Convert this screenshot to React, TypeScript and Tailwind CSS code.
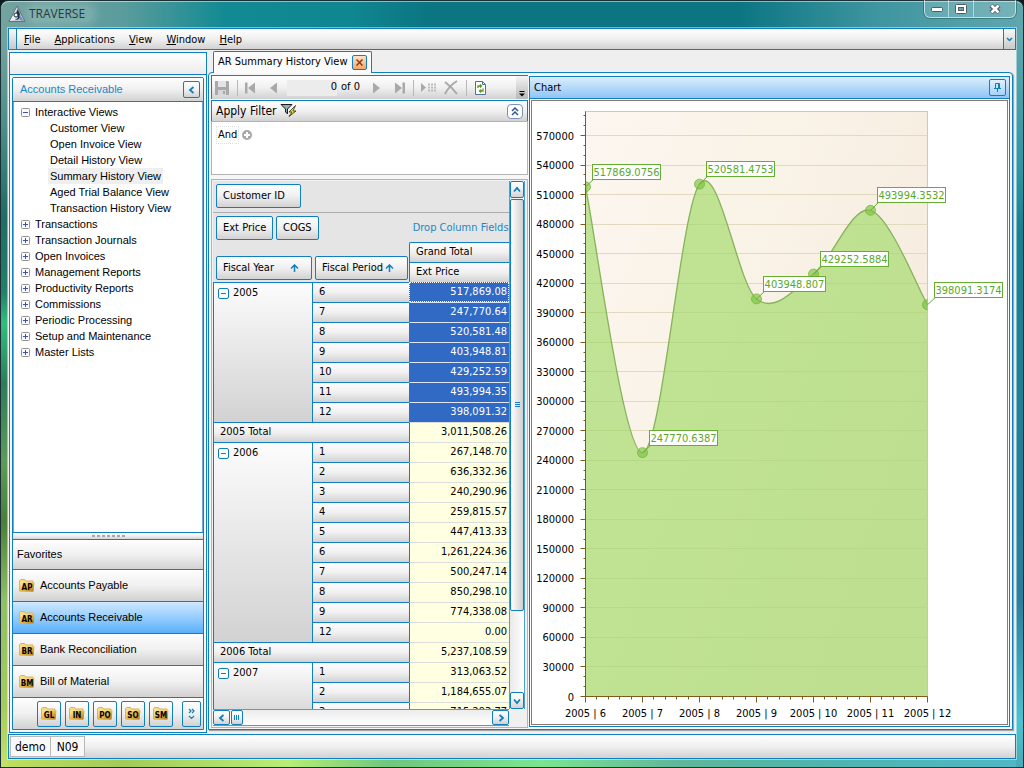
import type { ReactNode } from 'react'

const face = 'bg-linear-to-b from-[#fefefe] via-[#f0f0f0] to-[#d2d2d2]'
const edge = 'border-[#0e80bf]'
const field = `flex h-6 items-center rounded-xs border px-1.5 whitespace-nowrap ${face} ${edge}`

const menus = ['File', 'Applications', 'View', 'Window', 'Help']

const views = [
    'Customer View',
    'Open Invoice View',
    'Detail History View',
    'Summary History View',
    'Aged Trial Balance View',
    'Transaction History View',
]

const folders = [
    'Transactions',
    'Transaction Journals',
    'Open Invoices',
    'Management Reports',
    'Productivity Reports',
    'Commissions',
    'Periodic Processing',
    'Setup and Maintenance',
    'Master Lists',
]

const modules = [
    { code: 'AP', name: 'Accounts Payable' },
    { code: 'AR', name: 'Accounts Receivable' },
    { code: 'BR', name: 'Bank Reconciliation' },
    { code: 'BM', name: 'Bill of Material' },
]

const years = [
    {
        year: '2005',
        total: '3,011,508.26',
        selected: true,
        rows: [
            ['6', '517,869.08'],
            ['7', '247,770.64'],
            ['8', '520,581.48'],
            ['9', '403,948.81'],
            ['10', '429,252.59'],
            ['11', '493,994.35'],
            ['12', '398,091.32'],
        ],
    },
    {
        year: '2006',
        total: '5,237,108.59',
        selected: false,
        rows: [
            ['1', '267,148.70'],
            ['2', '636,332.36'],
            ['3', '240,290.96'],
            ['4', '259,815.57'],
            ['5', '447,413.33'],
            ['6', '1,261,224.36'],
            ['7', '500,247.14'],
            ['8', '850,298.10'],
            ['9', '774,338.08'],
            ['12', '0.00'],
        ],
    },
    {
        year: '2007',
        total: '',
        selected: false,
        rows: [
            ['1', '313,063.52'],
            ['2', '1,184,655.07'],
            ['3', '715,293.77'],
        ],
    },
]

const series = [
    { period: '6', value: 517869.0756 },
    { period: '7', value: 247770.6387 },
    { period: '8', value: 520581.4753 },
    { period: '9', value: 403948.807 },
    { period: '10', value: 429252.5884 },
    { period: '11', value: 493994.3532 },
    { period: '12', value: 398091.3174 },
]

function Folder({ code }: { code: string }) {
    return (
        <svg width="16" height="14" viewBox="0 0 16 14" aria-hidden="true" className="shrink-0">
            <defs>
                <linearGradient id="gold" x1="0" y1="0" x2="1" y2="1">
                    <stop offset="0" stopColor="#fdeb9c" />
                    <stop offset="0.55" stopColor="#e4b143" />
                    <stop offset="1" stopColor="#a8741c" />
                </linearGradient>
            </defs>
            <path d="M.5 12V1.500L1.500.5h4l1 1.500H14V12z" fill="#f8dc82" stroke="#d9b45c" />
            <path d="M1 3.500H15.500L14.500 12.500H1z" fill="url(#gold)" />
            <text x="8" y="10.500" textAnchor="middle" className="fill-black font-['DejaVu_Sans_Condensed'] text-[8px] font-bold">
                {code}
            </text>
        </svg>
    )
}

function Expander({ open }: { open: boolean }) {
    return (
        <svg width="9" height="9" viewBox="0 0 9 9" aria-hidden="true" className="shrink-0">
            <rect x="0.5" y="0.5" width="8" height="8" rx="1" fill="#fafafa" stroke="#919191" />
            <path d={open ? 'M2 4.5h5' : 'M2 4.5h5M4.5 2v5'} stroke="#3a56a8" />
        </svg>
    )
}

function Chevron({ d }: { d: string }) {
    return (
        <svg width="10" height="10" viewBox="0 0 10 10" fill="none" aria-hidden="true">
            <path d={d} stroke="#0e80bf" strokeWidth="1.8" />
        </svg>
    )
}

function SortArrow() {
    return (
        <svg width="9" height="8" viewBox="0 0 9 8" fill="none" aria-hidden="true">
            <path d="M4.5 8V1M1 4.5 4.5 1 8 4.5" stroke="#0e80bf" strokeWidth="1.5" />
        </svg>
    )
}

function ToolButton({ label, children }: { label: string; children: ReactNode }) {
    return (
        <button aria-label={label} className="flex size-5 shrink-0 items-center justify-center">
            <svg width="16" height="16" viewBox="0 0 16 16" aria-hidden="true">
                {children}
            </svg>
        </button>
    )
}

function TitleBar() {
    return (
        <header className="flex h-7 shrink-0 items-start justify-between">
            <div className="flex h-7 items-center gap-[3px]">
                <svg width="18" height="18" viewBox="0 0 18 18" aria-hidden="true">
                    <path d="M9 1 17 16.500H1z" fill="#b9c9d6" stroke="#5c7286" />
                    <path d="M9 2 6 9l-4 7 5-1z" fill="#e9eef3" />
                    <path d="M9 3c2 2-2 4 0 6s1 5-2 6c6 0 6-5 4-8-1-2-1-3-2-4z" fill="#1e2c3c" />
                    <circle cx="8" cy="10" r="2" fill="#fff" stroke="#1e2c3c" />
                    <path d="m11 9 5 7-4-1z" fill="#6f8cc0" />
                </svg>
                <h1 className="rounded-full bg-white/15 pr-2 font-['Open_Sans',sans-serif] text-xs text-[#263c40] shadow-[0_0_8px_4px_rgba(255,255,255,0.15)]">
                    TRAVERSE
                </h1>
            </div>
            <div className="flex h-[18px] rounded-b-md border border-t-0 border-white/60 bg-white/15 outline outline-[#24565e]/50">
                <button aria-label="Minimize" className="flex w-6 items-center justify-center border-r border-white/50">
                    <svg width="12" height="6" viewBox="0 0 12 6"><rect x="0.500" y="1.500" width="11" height="4" rx="1" fill="#fff" stroke="#555a66" /></svg>
                </button>
                <button aria-label="Maximize" className="flex w-[25px] items-center justify-center border-r border-white/50">
                    <svg width="12" height="10" viewBox="0 0 12 10">
                        <rect x="0.5" y="0.5" width="11" height="9" rx="1" fill="#fff" stroke="#555a66" />
                        <rect x="3.5" y="3.5" width="5" height="3" fill="#66a3ab" stroke="#555a66" />
                    </svg>
                </button>
                <button aria-label="Close" className="flex w-[41px] items-center justify-center">
                    <svg width="12" height="10" viewBox="0 0 12 10">
                        <path d="M2 1.500 10 8.500M10 1.500 2 8.500" stroke="#555a66" strokeWidth="4.500" />
                        <path d="M2.500 1.500 9.500 8.500M9.500 1.500 2.500 8.500" stroke="#fff" strokeWidth="2.500" />
                    </svg>
                </button>
            </div>
        </header>
    )
}

function MenuBar() {
    return (
        <nav className={`flex h-[22px] shrink-0 items-stretch border ${edge} ${face}`}>
            <span className={`w-2 border-r bg-linear-to-b from-[#fafafa] to-[#c8c8c8] ${edge}`} />
            <div className="flex flex-1 items-center gap-3.5 px-[7px]">
                {menus.map((m) => (
                    <button key={m} className="leading-none">
                        <span className="underline">{m[0]}</span>
                        {m.slice(1)}
                    </button>
                ))}
            </div>
            <button aria-label="More" className={`flex w-3 items-center justify-center border-l bg-linear-to-b from-[#fafafa] to-[#c8c8c8] ${edge}`}>
                <svg width="7" height="5" viewBox="0 0 7 5" fill="none"><path d="M1 1l2.500 2.500L6 1" stroke="#0e80bf" strokeWidth="1.500" /></svg>
            </button>
        </nav>
    )
}

function Sidebar() {
    return (
        <aside className={`ml-px mt-0.5 mb-px flex w-[198px] shrink-0 flex-col border bg-[#f6f6f6] font-['Liberation_Sans',sans-serif] ${edge}`}>
            <div className={`h-[22px] shrink-0 border-b bg-linear-to-b from-white to-[#ececec] ${edge}`} />
            <div className={`m-0.5 flex min-h-0 flex-1 flex-col rounded-t-xs border ${edge}`}>
                <div className={`flex h-6 shrink-0 items-center justify-between border-b pr-[3px] pl-[7px] text-[#1b87c6] ${face} ${edge}`}>
                    <h2>Accounts Receivable</h2>
                    <button aria-label="Collapse" className={`flex size-[17px] items-center justify-center rounded-xs border ${face} ${edge}`}>
                        <Chevron d="M6.5 2 3 5l3.500 3" />
                    </button>
                </div>
                <ul className="min-h-0 flex-1 overflow-hidden border-x border-[#6fa8d8] bg-white pt-0.5 pl-[7px]">
                    <li>
                        <button className="flex h-4 items-center gap-[5px]">
                            <Expander open={true} />
                            Interactive Views
                        </button>
                        <ul className="pl-[27px]">
                            {views.map((v) => (
                                <li key={v} className="flex h-4 items-center">
                                    <a href="#" className={v === 'Summary History View' ? 'bg-[#efefef] px-0.5 leading-4' : 'px-0.5 leading-4'}>
                                        {v}
                                    </a>
                                </li>
                            ))}
                        </ul>
                    </li>
                    {folders.map((f) => (
                        <li key={f}>
                            <button className="flex h-4 items-center gap-[5px]">
                                <Expander open={false} />
                                {f}
                            </button>
                        </li>
                    ))}
                </ul>
                <div className={`flex h-[7px] shrink-0 items-center justify-center gap-0.5 border-t ${face} ${edge}`}>
                    {[0, 1, 2, 3, 4, 5, 6].map((n) => (
                        <span key={n} className="h-0.5 w-[3px] bg-[#a8a8a8]" />
                    ))}
                </div>
                <button className={`flex h-[30px] shrink-0 items-center border-t px-1 ${face} ${edge}`}>Favorites</button>
                {modules.map((m) => (
                    <button
                        key={m.code}
                        className={`flex h-8 shrink-0 items-center gap-[5px] border-t px-1.5 ${edge} ${
                            m.code === 'AR' ? 'bg-linear-to-b from-[#cfe8ff] to-[#58b0fa]' : face
                        }`}
                    >
                        <Folder code={m.code} />
                        {m.name}
                    </button>
                ))}
                <div className={`flex h-8 shrink-0 items-center justify-end gap-1 border-t pr-0.5 ${face} ${edge}`}>
                    {['GL', 'IN', 'PO', 'SO', 'SM'].map((c) => (
                        <button key={c} aria-label={c} className={`flex h-[26px] w-6 items-center justify-center rounded-xs border ${face} ${edge}`}>
                            <Folder code={c} />
                        </button>
                    ))}
                    <button aria-label="Configure" className={`ml-[5px] flex h-[26px] w-[19px] items-center justify-center rounded-xs border ${face} ${edge}`}>
                        <svg width="8" height="12" viewBox="0 0 8 12" fill="none">
                            <path d="M1 1l2 2-2 2M4 1l2 2-2 2M1 8l2.500 2.500L6 8" stroke="#0e80bf" strokeWidth="1.200" />
                        </svg>
                    </button>
                </div>
            </div>
        </aside>
    )
}

function Toolbar() {
    const off = '#a9a9a9'
    return (
        <div className={`flex h-6 shrink-0 items-center border-t border-l ${face} ${edge}`}>
            <ToolButton label="Save">
                <path d="M1 1h13l1 1v13H1z" fill={off} />
                <path d="M4 1h8v6H4z" fill="#e4e4e4" />
                <path d="M4 10h8v5H4z" fill="#d8d8d8" />
                <path d="M9 11h2v3H9z" fill={off} />
            </ToolButton>
            <span className="mr-0.5 ml-[5px] h-4 w-px bg-[#b9b9b9]" />
            <ToolButton label="First">
                <path d="M3 2.500h2.500v11H3zM13 2.500v11L6 8z" fill={off} />
            </ToolButton>
            <span className="w-[3px]" />
            <ToolButton label="Previous">
                <path d="M12 2.500v11L5 8z" fill={off} />
            </ToolButton>
            <input aria-label="Position" defaultValue="0" className="ml-1 h-4 w-[50px] shrink-0 bg-[#ececec] text-right outline-none" />
            <span className="w-[29px] shrink-0 pl-1 whitespace-nowrap">of 0</span>
            <ToolButton label="Next">
                <path d="M5 2.500v11L12 8z" fill={off} />
            </ToolButton>
            <span className="w-1" />
            <ToolButton label="Last">
                <path d="M10.500 2.500H13v11h-2.500zM3 2.500v11L10 8z" fill={off} />
            </ToolButton>
            <span className="mr-1 ml-[3px] h-4 w-px bg-[#b9b9b9]" />
            <ToolButton label="Add">
                <path d="M1 3v9l5-4.500z" fill={off} />
                <path d="M8 4.500h8M8 7.500h8M8 10.500h8" stroke={off} strokeWidth="2" strokeDasharray="2 1" opacity="0.7" />
            </ToolButton>
            <span className="w-[3px]" />
            <ToolButton label="Delete">
                <path d="M2 2c4 3 8 7 12 12M14 1C9 4 5 8 2 14" fill="none" stroke={off} strokeWidth="2" />
            </ToolButton>
            <span className="mr-[3px] ml-[5px] h-4 w-px bg-[#b9b9b9]" />
            <ToolButton label="Refresh">
                <path d="M3.500 1.500h7l3 3v10h-10z" fill="#fff" stroke="#50709a" />
                <path d="M10.500 1.500v3h3" fill="none" stroke="#50709a" />
                <path d="M6 8V6h3.500M8 4.500 9.500 6 8 7.500M11 8.500v2.500H7.500M9 9.500 7.500 11 9 12.500" fill="none" stroke="#5b9b1b" strokeWidth="1.300" />
            </ToolButton>
            <button aria-label="Toolbar options" className="ml-auto flex h-full w-3 items-end justify-center bg-linear-to-b from-[#f4f4f4] to-[#b8b8b8] pb-0.5">
                <svg width="6" height="6" viewBox="0 0 6 6"><path d="M.5.5h5" stroke="#000" /><path d="M0 2.500h6L3 5.500z" fill="#000" /></svg>
            </button>
        </div>
    )
}

function Filter() {
    return (
        <section className="mt-px">
            <div className={`flex h-[21px] items-center border-t border-x px-1 text-xs ${face} ${edge}`}>
                <h2>Apply Filter</h2>
                <svg width="18" height="16" viewBox="0 0 18 16" aria-hidden="true" className="ml-[3px]">
                    <path d="M1 1.500h11L7.500 6v5L5.500 9V6z" fill="#8fb3ad" stroke="#1b1b1b" />
                    <path d="M15.500 2.500 9 9h3l-3 4.500L16 8h-3z" fill="#f4e21b" stroke="#2b2b12" strokeWidth="0.800" />
                </svg>
                <button aria-label="Collapse filter" className="ml-auto flex h-[15px] w-4 items-center justify-center rounded-sm border border-[#7a93bd] bg-white">
                    <svg width="8" height="9" viewBox="0 0 8 9" fill="none"><path d="M1 4l3-3 3 3M1 8l3-3 3 3" stroke="#2f5699" strokeWidth="1.500" /></svg>
                </button>
            </div>
            <div className="flex h-[54px] items-start border border-[#b3b3b3] bg-white p-1">
                <button className="h-[18px] border border-dotted border-[#e0e0e0] px-px">And</button>
                <button aria-label="Add condition" className="mt-1 ml-[3px]">
                    <svg width="10" height="10" viewBox="0 0 10 10"><circle cx="5" cy="5" r="5" fill="#a8a8a8" /><path d="M5 2v6M2 5h6" stroke="#fff" strokeWidth="2" /></svg>
                </button>
            </div>
        </section>
    )
}

function PivotTable() {
    const value = (selected: boolean, focused: boolean) => {
        if (focused) return 'h-5 border border-dotted border-white bg-[#316ac5] p-0 pr-px text-right text-white'
        if (selected) return 'h-5 border-t border-l border-t-[#dfe6f2] border-l-[#0e80bf] bg-[#316ac5] p-0 pr-0.5 text-right text-white'
        return 'h-5 border-t border-l border-t-[#dcdcdc] border-l-[#0e80bf] bg-[#ffffe1] p-0 pr-0.5 text-right'
    }

    return (
        <table className="w-full table-fixed border-separate border-spacing-0 text-left">
            <colgroup>
                <col className="w-[99px]" />
                <col className="w-[97px]" />
                <col />
            </colgroup>
            <thead>
                <tr className="h-5">
                    <th colSpan={2} rowSpan={2} className="p-0 pl-[3px] align-bottom font-normal">
                        <div className="flex gap-[3px] pb-0.5">
                            <button className={`${field} w-24 gap-4`}>Fiscal Year <SortArrow /></button>
                            <button className={`${field} w-[93px] gap-0.5`}>Fiscal Period <SortArrow /></button>
                        </div>
                    </th>
                    <th className={`h-5 rounded-tl-xs border-t border-l p-0 pl-1.5 font-normal ${face} ${edge}`}>Grand Total</th>
                </tr>
                <tr>
                    <th className={`h-5 border-t border-l p-0 pl-1.5 font-normal ${face} ${edge}`}>Ext Price</th>
                </tr>
            </thead>
            {years.map((y) => (
                <tbody key={y.year}>
                    {y.rows.map(([period, amount], i) => (
                        <tr key={period}>
                            {i === 0 && (
                                <th rowSpan={y.rows.length} scope="rowgroup" className={`border-t border-l bg-linear-to-b from-[#fcfcfc] to-[#d2d2d2] p-0 align-top font-normal ${edge}`}>
                                    <div className="flex h-5 items-center gap-1 pl-1">
                                        <button aria-label="Collapse" className={`flex size-[11px] items-center justify-center rounded-xs border bg-white ${edge}`}>
                                            <span className="h-px w-[5px] bg-[#0e80bf]" />
                                        </button>
                                        {y.year}
                                    </div>
                                </th>
                            )}
                            <th scope="row" className={`h-5 border-t border-l p-0 pl-1.5 font-normal ${face} ${edge}`}>{period}</th>
                            <td className={value(y.selected, y.selected && i === 0)}>{amount}</td>
                        </tr>
                    ))}
                    {y.total && (
                        <tr>
                            <th colSpan={2} scope="row" className={`h-5 border-t border-l p-0 pl-1.5 font-normal ${face} ${edge}`}>{y.year} Total</th>
                            <td className={value(false, false)}>{y.total}</td>
                        </tr>
                    )}
                </tbody>
            ))}
        </table>
    )
}

function Pivot() {
    const knob = `flex shrink-0 items-center justify-center rounded-xs border ${face} ${edge}`
    return (
        <section className="mt-1 flex min-h-0 flex-1 flex-col border border-[#b3b3b3] bg-[#f0f0f0] py-px pr-0.5 pl-px">
            <div className="flex min-h-0 flex-1">
                <div className="min-w-0 flex-1 overflow-hidden bg-[#e5e5e5]">
                    <div className="flex h-8 items-start border-b border-[#adadad] pt-[3px] pl-[3px]">
                        <button className={`${field} w-[85px]`}>Customer ID</button>
                    </div>
                    <div className="flex h-[29px] items-start gap-[3px] pt-[3px] pl-[3px]">
                        <button className={`${field} w-[57px]`}>Ext Price</button>
                        <button className={`${field} w-[43px]`}>COGS</button>
                        <span className="ml-[91px] leading-6 whitespace-nowrap text-[#1b87c6]">Drop Column Fields Here</span>
                    </div>
                    <PivotTable />
                </div>
                <div className="flex w-4 flex-col border-x border-[#4c9fd8] bg-linear-to-r from-[#e9e9e9] to-white">
                    <button aria-label="Scroll up" className={`${knob} h-[17px]`}><Chevron d="M2 6.500 5 3l3 3.500" /></button>
                    <div className={`mt-px flex h-[412px] shrink items-center justify-center rounded-xs border bg-linear-to-r from-white to-[#d0d0d0] ${edge}`}>
                        <svg width="5" height="6" viewBox="0 0 5 6"><path d="M0 .5h5M0 2.500h5M0 4.500h5" stroke="#0e80bf" /></svg>
                    </div>
                    <button aria-label="Scroll down" className={`${knob} mt-auto h-[17px]`}><Chevron d="M2 3.500 5 7l3-3.500" /></button>
                </div>
            </div>
            <div className="mr-4 flex h-[17px] shrink-0 border-y border-[#4c9fd8] bg-linear-to-b from-[#ececec] to-white">
                <button aria-label="Scroll left" className={`${knob} w-[17px]`}><Chevron d="M6.500 2 3 5l3.500 3" /></button>
                <div className={`${knob} ml-px w-3`}>
                    <svg width="6" height="5" viewBox="0 0 6 5"><path d="M.5 0v5M2.500 0v5M4.500 0v5" stroke="#0e80bf" /></svg>
                </div>
                <button aria-label="Scroll right" className={`${knob} ml-auto w-[17px]`}><Chevron d="M3.500 2 7 5 3.500 8" /></button>
            </div>
        </section>
    )
}

function Chart() {
    const left = 53.5
    const right = 395.5
    const top = 10.5
    const base = 595.5
    const step = 57
    const sy = (v: number) => base - (v * 561) / 570000
    const pts = series.map((s, i) => ({ x: left + i * step, y: sy(s.value) }))

    // cardinal spline through the points
    const curve = pts.slice(1).reduce((d, p, i) => {
        const prev = pts[i]
        const before = pts[i - 1] ?? prev
        const after = pts[i + 2] ?? p
        const c1 = `${prev.x + (p.x - before.x) / 6} ${prev.y + (p.y - before.y) / 6}`
        const c2 = `${p.x - (after.x - prev.x) / 6} ${p.y - (after.y - prev.y) / 6}`
        return `${d} C${c1} ${c2} ${p.x} ${p.y}`
    }, `M${pts[0].x} ${pts[0].y}`)

    const majors = Array.from({ length: 20 }, (_, i) => i * 30000)
    const minors = Array.from({ length: 60 }, (_, i) => i * 10000)

    return (
        <svg viewBox="0 0 475 623" className="h-full w-full text-[11px]" role="img" aria-label="Ext Price by fiscal period">
            <defs>
                <linearGradient id="plot" x1="0" y1="0" x2="1" y2="0.6">
                    <stop offset="0" stopColor="#fdf6f0" />
                    <stop offset="0.5" stopColor="#f9f2e6" />
                    <stop offset="1" stopColor="#f5ebdd" />
                </linearGradient>
                <clipPath id="inside">
                    <rect x={left} y={top} width={right - left} height={base - top} />
                </clipPath>
            </defs>
            <rect x={left} y={top} width={right - left} height={base - top} fill="url(#plot)" stroke="#d6c7a8" />
            {majors.slice(1).map((v) => (
                <path key={v} d={`M${left} ${Math.floor(sy(v)) + 0.5}H${right}`} stroke="#e2d9bf" />
            ))}
            <path d={`${curve} V${base} H${left}Z`} fill="#a0d965" fillOpacity="0.65" />
            <path d={curve} fill="none" stroke="#86b35a" strokeWidth="1.300" />
            <g clipPath="url(#inside)">
                {pts.map((p) => (
                    <circle key={p.x} cx={p.x} cy={p.y} r="5" fill="#7cc242" fillOpacity="0.65" stroke="#6cb52f" strokeOpacity="0.7" />
                ))}
            </g>
            <path d={`M${left} ${top}V${base}H${right}`} fill="none" stroke="#7f5a1c" />
            {minors.map((v) => (
                <path key={v} d={`M${v % 30000 ? left - 2 : left - 5} ${Math.floor(sy(v)) + 0.5}H${left}`} stroke="#7f5a1c" />
            ))}
            {majors.map((v) => (
                <text key={v} x="42" y={Math.round(sy(v)) + 4} textAnchor="end">{v}</text>
            ))}
            {Array.from({ length: 31 }, (_, i) => (
                <path key={i} d={`M${Math.round(i * 11.4) + left} ${base}v${i % 5 ? 3 : 6}`} stroke="#7f5a1c" />
            ))}
            {series.map((s, i) => (
                <text key={s.period} x={pts[i].x} y="616" textAnchor="middle">2005 | {s.period}</text>
            ))}
            {series.map((s, i) => {
                const x = pts[i].x + 7
                const y = Math.round(pts[i].y) - 22.5
                const w = String(s.value).length > 10 ? 68 : 62
                return (
                    <g key={s.period}>
                        <path d={`M${pts[i].x} ${pts[i].y}L${x + 2} ${y + 14}`} stroke="#66ad33" />
                        <rect x={x} y={y} width={w} height="15" fill="#fff" stroke="#66ad33" />
                        <text x={x + w / 2} y={y + 11} textAnchor="middle" fill="#5aa82a">{s.value}</text>
                    </g>
                )
            })}
        </svg>
    )
}

function Workspace() {
    return (
        <main className="mt-px mr-[3px] mb-1 ml-px flex min-w-0 flex-1 flex-col">
            <div className={`relative -mb-px ml-[5px] flex h-[22px] shrink-0 items-center gap-1 self-start rounded-t-xs border border-b-0 bg-[#fbfbfb] pr-1 pl-1 ${edge}`}>
                AR Summary History View
                <button aria-label="Close tab" className={`flex size-[15px] items-center justify-center rounded-xs border bg-linear-to-b from-[#ffe2c8] to-[#f8a468] ${edge}`}>
                    <svg width="7" height="7" viewBox="0 0 7 7"><path d="M.5.5l6 6M6.500.5l-6 6" stroke="#8a3d10" strokeWidth="1.500" /></svg>
                </button>
            </div>
            <div className={`flex min-h-0 flex-1 gap-px rounded-t-sm border bg-[#f6f6f6] px-0.5 pt-0.5 pb-px shadow-[1px_1px_1px_rgba(0,0,0,0.35)] ${edge}`}>
                <div className="flex w-[317px] shrink-0 flex-col">
                    <Toolbar />
                    <Filter />
                    <Pivot />
                </div>
                <section className={`my-px flex min-w-0 flex-1 flex-col border bg-white ${edge}`}>
                    <div className={`flex h-[22px] shrink-0 items-center justify-between border-b bg-linear-to-b from-[#dcedfd] to-[#8ec5f6] pr-[3px] pl-1 ${edge}`}>
                        <h2 className="pt-0.5">Chart</h2>
                        <button aria-label="Pin" className={`flex size-[17px] items-center justify-center rounded-xs border bg-linear-to-b from-[#e3f1fe] to-[#a5d2fa] ${edge}`}>
                            <svg width="7" height="9" viewBox="0 0 7 9" fill="none"><path d="M1.500 5V.5h4V5M0 5.500h7M3.500 5.500V9M4.500 1v4" stroke="#0e80bf" /></svg>
                        </button>
                    </div>
                    <div className="m-px min-h-0 flex-1 border border-[#8f7868]">
                        <Chart />
                    </div>
                </section>
            </div>
        </main>
    )
}

export default function App() {
    return (
        <div className="flex h-screen w-full flex-col overflow-hidden bg-[#0b1a1c] font-['DejaVu_Sans_Condensed','Noto_Sans',sans-serif] text-[11px] text-black">
            <div className="flex min-h-0 flex-1 flex-col rounded-t-lg border border-[#1a2f33] bg-[linear-gradient(90deg,#74a39f,#5a9c9c_12%,#118a93_22%,#0f8791_34%,#0b7582_42%,#0b7582_72%,#3f96a0_86%,#5fa6ad)]">
                <div className="flex min-h-0 flex-1 flex-col rounded-t-lg border-t border-white/50 bg-[linear-gradient(90deg,#bfe060,#a3cb57_12%,#b8ee74_28%,#6fc77c_38%,#7be58f_53%,#5fb898_66%,#4fb5ac_80%,#4fb8c4)] bg-[length:100%_9px] bg-bottom bg-no-repeat">
                    <div className="flex min-h-0 flex-1 flex-col bg-[linear-gradient(180deg,#74a39f00_5%,#4c8f8a_16%,#1f6d64_28%,#23806a_38%,#2fc07c_42%,#2c7d58_50%,#5d9c58_60%,#4a8038_68%,#8fbf66_78%,#a5cc5c_92%,#c4e268),linear-gradient(180deg,#5fa6ad00_5%,#2f95a3_22%,#17818f_30%,#2a7f9c_78%,#4cc3cf_94%,#48aab8)] bg-[length:7px_100%,7px_100%] bg-[position:left_top,right_top] bg-no-repeat px-[7px] pb-2">
                        <div className="-mt-0.5 flex min-h-0 flex-1 flex-col">
                            <TitleBar />
                            <div className="flex min-h-0 flex-1 flex-col ring ring-white/45">
                                <MenuBar />
                                <div className="flex min-h-0 flex-1 bg-[#efefef]">
                                    <Sidebar />
                                    <Workspace />
                                </div>
                                <footer className={`flex h-[25px] shrink-0 items-center border p-px text-xs ${face} ${edge}`}>
                                    <span className="flex h-[21px] items-center border border-[#b9b9b9] bg-[#f8f8f8] px-1">demo</span>
                                    <span className="flex h-[21px] items-center border border-l-0 border-[#b9b9b9] bg-[#f8f8f8] px-1.5">N09</span>
                                </footer>
                            </div>
                        </div>
                    </div>
                </div>
            </div>
        </div>
    )
}
